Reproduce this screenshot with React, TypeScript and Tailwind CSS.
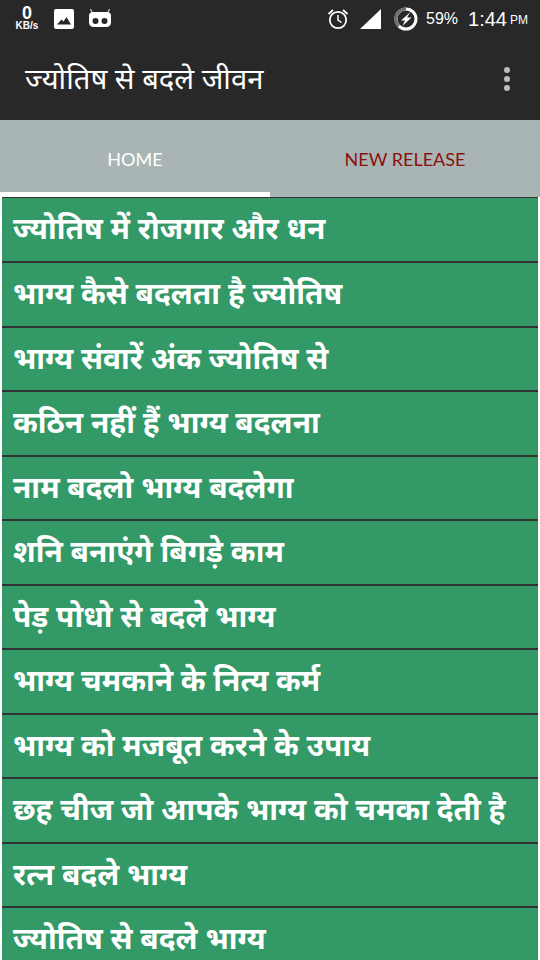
const topics = [
  "ज्योतिष में रोजगार और धन",
  "भाग्य कैसे बदलता है ज्योतिष",
  "भाग्य संवारें अंक ज्योतिष से",
  "कठिन नहीं हैं भाग्य बदलना",
  "नाम बदलो भाग्य बदलेगा",
  "शनि बनाएंगे बिगड़े काम",
  "पेड़ पोधो से बदले भाग्य",
  "भाग्य चमकाने के नित्य कर्म",
  "भाग्य को मजबूत करने के उपाय",
  "छह चीज जो आपके भाग्य को चमका देती है",
  "रत्न बदले भाग्य",
  "ज्योतिष से बदले भाग्य",
];

function StatusBar() {
  return (
    <div className="h-[37px] flex items-center pl-[14px] pr-[12px] text-white font-['Liberation_Sans',sans-serif]">
      <div className="flex flex-col items-center w-[26px] leading-none">
        <span className="text-[18px] font-bold h-[15px] leading-[15px]">0</span>
        <span className="text-[10px] font-bold leading-[10px]">KB/s</span>
      </div>
      <svg className="ml-[14px]" width="20" height="20" viewBox="0 0 20 20">
        <rect width="20" height="20" rx="2" fill="#fff" />
        <path d="M3 15.5 L7.5 10.5 L9.5 12.5 L12.5 8 L17 15.5 Z" fill="#282828" />
      </svg>
      <svg className="ml-[14px]" width="24" height="20" viewBox="0 0 24 20">
        <path d="M4 3 L2.5 0 M20 3 L21.5 0" stroke="#fff" strokeWidth="1" />
        <path d="M1 7 Q1 3 5 3 H19 Q23 3 23 7 V13 Q23 18 18 18 H6 Q1 18 1 13 Z" fill="#fff" />
        <circle cx="7.5" cy="12" r="3" fill="#282828" />
        <circle cx="16.5" cy="12" r="3" fill="#282828" />
      </svg>
      <div className="ml-auto flex items-center">
        <svg width="22" height="22" viewBox="0 0 22 22" fill="none" stroke="#fff">
          <circle cx="11" cy="12" r="8.2" strokeWidth="1.8" />
          <path d="M11 7 V12 L14.5 14.5" strokeWidth="1.5" />
          <path d="M1.5 6 L6 2 M20.5 6 L16 2" strokeWidth="1.8" />
        </svg>
        <svg className="ml-[11px]" width="22" height="22" viewBox="0 0 22 22">
          <path d="M0 21 L21 1 V21 Z" fill="#fff" />
        </svg>
        <svg className="ml-[12px]" width="24" height="24" viewBox="0 0 24 24" fill="none">
          <circle cx="12" cy="12" r="10" stroke="#fff" strokeWidth="3" />
          <path d="M4.9 19.1 A10 10 0 0 1 12 2" stroke="#6e6e6e" strokeWidth="3" />
          <path d="M16.5 5 L7 13.5 H11 L8.5 19 L17.5 10.5 H13 Z" fill="#fff" />
        </svg>
        <span className="ml-[8px] text-[16px] leading-none">59%</span>
        <span className="ml-[10px] text-[20px] leading-none">1:44</span>
        <span className="ml-[3px] mt-[3px] text-[12px] leading-none">PM</span>
      </div>
    </div>
  );
}

function AppBar() {
  return (
    <div className="h-[83px] flex items-center pl-[25px] pr-[30px]">
      <span className="text-white text-[29.2px] leading-none pt-[1px] font-['Noto_Sans',sans-serif]">
        ज्योतिष से बदले जीवन
      </span>
      <div className="ml-auto flex flex-col gap-[3px]">
        <span className="w-[6px] h-[6px] rounded-full bg-[#bdbdbd]" />
        <span className="w-[6px] h-[6px] rounded-full bg-[#bdbdbd]" />
        <span className="w-[6px] h-[6px] rounded-full bg-[#bdbdbd]" />
      </div>
    </div>
  );
}

function Tabs() {
  return (
    <div className="h-[76.6px] flex bg-[#a9b5b4] font-['Lato',sans-serif] text-[18px]">
      <div className="w-[270px] flex items-center justify-center text-white border-b-[5px] border-white pt-[8px]">
        HOME
      </div>
      <div className="w-[270px] flex items-center justify-center text-[#8b1010] border-b-[5px] border-transparent pt-[8px]">
        NEW RELEASE
      </div>
    </div>
  );
}

export default function App() {
  return (
    <div className="w-[540px] h-[960px] overflow-hidden bg-white">
      <div className="bg-[#282828]">
        <StatusBar />
        <AppBar />
      </div>
      <Tabs />
      <ul className="px-[2px]">
        {topics.map((t) => (
          <li
            key={t}
            className="h-[64.5px] bg-[#339966] border-t-2 first:border-t border-[#333333] flex items-center pl-[11px] pb-[1px] text-white text-[29.85px] font-bold whitespace-nowrap font-['Noto_Sans',sans-serif]"
          >
            {t}
          </li>
        ))}
      </ul>
    </div>
  );
}
